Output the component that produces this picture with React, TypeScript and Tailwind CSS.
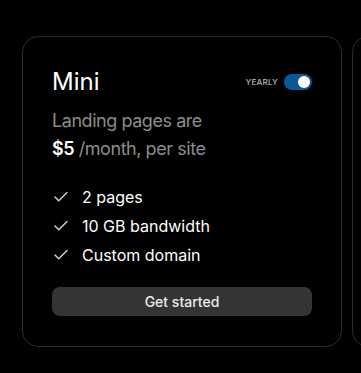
import { Check } from 'lucide-react';

const features = ['2 pages', '10 GB bandwidth', 'Custom domain'];

export default function App() {
  return (
    <div
      className="w-[361px] h-[373px] bg-black overflow-hidden flex gap-[10px] pl-[22px] pt-[36px]"
      style={{ fontFamily: 'Inter, "Noto Sans", sans-serif' }}
    >
      <div className="w-[320px] h-[311px] shrink-0 rounded-2xl border border-[#2c2c2c] p-[29px] flex flex-col">
        <div className="flex items-center justify-between">
          <h2 className="text-2xl leading-8 text-white font-normal">Mini</h2>
          <div className="flex items-center gap-[6px]">
            <span className="text-[8px] font-semibold tracking-wide text-[#a3a3a3]">YEARLY</span>
            <div className="w-[28px] h-[16px] rounded-full bg-[#0b5896] flex items-center justify-end px-[2px]">
              <div className="w-[12px] h-[12px] rounded-full bg-white" />
            </div>
          </div>
        </div>
        <p className="mt-[9px] text-lg leading-7 tracking-tight text-[#8c8c8c]">Landing pages are</p>
        <p className="text-lg leading-7 tracking-tight text-[#8c8c8c]">
          <span className="text-white font-semibold">$5</span> /month, per site
        </p>
        <ul className="mt-[22px] space-y-[5px]">
          {features.map((f) => (
            <li key={f} className="flex items-center gap-3 text-base leading-6 text-white">
              <Check size={18} strokeWidth={2} className="text-[#cfcfcf] shrink-0" />
              {f}
            </li>
          ))}
        </ul>
        <button className="mt-[20px] h-[29px] w-full rounded-lg bg-[#343434] text-sm font-medium text-[#ececec]">
          Get started
        </button>
      </div>
      <div className="w-[320px] h-[311px] shrink-0 rounded-2xl border border-[#2c2c2c]" />
    </div>
  );
}
